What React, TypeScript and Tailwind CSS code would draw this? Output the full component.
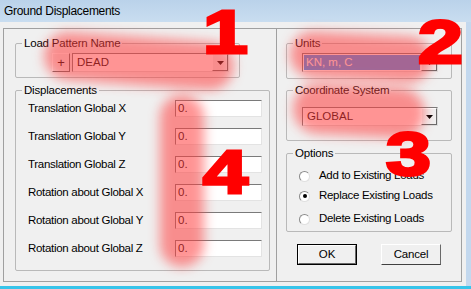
import React from 'react';

const rows = [
  'Translation Global X',
  'Translation Global Y',
  'Translation Global Z',
  'Rotation about Global X',
  'Rotation about Global Y',
  'Rotation about Global Z',
];

const ArrowButton = () => (
  <div className="w-[16px] h-full bg-[#f0f0f0] border border-t-white border-l-white border-r-[#696969] border-b-[#696969] flex items-center justify-center">
    <svg width="7" height="4" viewBox="0 0 7 4">
      <path d="M0 0h7L3.5 4z" fill="#000" />
    </svg>
  </div>
);

const GroupBox = ({
  label,
  className,
  children,
}: {
  label: string;
  className: string;
  children?: React.ReactNode;
}) => (
  <div className={`relative border border-[#b9b9b9] rounded-[2px] ${className}`}>
    <span className="absolute -top-[8px] left-[6px] px-[2px] bg-[#f0f0f0] text-[11.5px] tracking-[-0.2px] leading-[14px]">
      {label}
    </span>
    {children}
  </div>
);

const Radio = ({ label, checked }: { label: string; checked?: boolean }) => (
  <div className="flex items-center h-[20px]">
    <div className="ml-[12px] w-[11px] h-[11px] rounded-full bg-white border border-t-[#8a8a8a] border-l-[#8a8a8a] border-r-[#e0e0e0] border-b-[#e0e0e0] flex items-center justify-center">
      {checked && <div className="w-[4px] h-[4px] rounded-full bg-black" />}
    </div>
    <span className="ml-[9px] text-[11.5px] tracking-[-0.3px]">{label}</span>
  </div>
);

export default function App() {
  return (
    <div className="relative w-[471px] h-[289px] overflow-hidden bg-[#c3d8ee] font-['Liberation_Sans',Arial,sans-serif] text-black">
      {/* Title bar */}
      <div className="h-[22px] pl-[4px] flex items-center text-[12px] tracking-[-0.3px] bg-gradient-to-b from-[#bad2ea] to-[#c9ddf0]">
        Ground Displacements
      </div>

      {/* Body */}
      <div className="w-[466px] h-[264px] bg-[#f0f0f0] pt-[6px] pl-[3px]">
        <div className="flex h-[254px] w-[459px]">
          {/* Left panel */}
          <div className="w-[274px] h-full border border-[#a0a0a0] pl-[11px] pt-[14px]">
            <GroupBox label="Load Pattern Name" className="w-[225px] h-[35px] pl-[36px] pt-[9px]">
              <div className="flex h-[19px] gap-[2px]">
                <div className="w-[18px] h-full border border-t-white border-l-white border-r-[#696969] border-b-[#696969] flex items-center justify-center text-[13px] leading-none">
                  +
                </div>
                <div className="w-[157px] h-full bg-white border border-t-[#7a7a7a] border-l-[#7a7a7a] border-r-[#dcdcdc] border-b-[#dcdcdc] flex items-center">
                  <span className="flex-1 pl-[4px] text-[11.5px]">DEAD</span>
                  <ArrowButton />
                </div>
              </div>
            </GroupBox>

            <GroupBox label="Displacements" className="mt-[12px] w-[255px] h-[181px] pt-[9px]">
              <div className="flex flex-col">
                {rows.map((r) => (
                  <div key={r} className="flex items-start h-[28px]">
                    <span className="w-[159px] pl-[12px] text-[11.5px] tracking-[-0.3px] leading-[17px]">{r}</span>
                    <div className="w-[87px] h-[17px] bg-white border border-t-[#7a7a7a] border-l-[#7a7a7a] border-r-[#e3e3e3] border-b-[#e3e3e3] pl-[2px] text-[11.5px] leading-[15px]">
                      0.
                    </div>
                  </div>
                ))}
              </div>
            </GroupBox>
          </div>

          {/* Right panel */}
          <div className="w-[185px] h-full border-y border-r border-[#a0a0a0] pl-[9px] pt-[14px]">
            <GroupBox label="Units" className="w-[166px] h-[36px] pl-[15px] pt-[9px]">
              <div className="w-[136px] h-[19px] bg-white border border-t-[#7a7a7a] border-l-[#7a7a7a] border-r-[#dcdcdc] border-b-[#dcdcdc] flex items-center">
                <div className="flex-1 h-full p-[1px]">
                  <div className="h-full bg-[#3399ff] text-white text-[11.5px] leading-[15px] pl-[2px]">
                    KN, m, C
                  </div>
                </div>
                <ArrowButton />
              </div>
            </GroupBox>

            <GroupBox label="Coordinate System" className="mt-[11px] w-[166px] h-[51px] pl-[15px] pt-[16px]">
              <div className="w-[136px] h-[19px] bg-white border border-t-[#7a7a7a] border-l-[#7a7a7a] border-r-[#dcdcdc] border-b-[#dcdcdc] flex items-center">
                <span className="flex-1 pl-[4px] text-[11.5px]">GLOBAL</span>
                <ArrowButton />
              </div>
            </GroupBox>

            <GroupBox label="Options" className="mt-[12px] w-[166px] h-[79px] pt-[12px]">
              <Radio label="Add to Existing Loads" />
              <Radio label="Replace Existing Loads" checked />
              <div className="mt-[3px]">
                <Radio label="Delete Existing Loads" />
              </div>
            </GroupBox>

            <div className="flex gap-[24px] mt-[12px] pl-[11px]">
              <div className="w-[60px] h-[21px] border border-black">
                <div className="h-full border border-t-white border-l-white border-r-[#696969] border-b-[#696969] flex items-center justify-center text-[11.5px]">
                  OK
                </div>
              </div>
              <div className="w-[60px] h-[21px] border border-t-white border-l-white border-r-[#696969] border-b-[#404040] flex items-center justify-center text-[11.5px] tracking-[-0.2px]">
                Cancel
              </div>
            </div>
          </div>
        </div>
      </div>
      <div className="absolute left-0 bottom-0 w-full h-[3px] bg-[#37c4ea]" />

      {/* Red highlight blobs */}
      <div className="absolute left-[44px] top-[37px] w-[190px] h-[48px] rounded-full bg-[#ff3c3c]/55 blur-[6px] rotate-[4deg]" />
      <div className="absolute left-[290px] top-[34px] w-[142px] h-[46px] rounded-full bg-[#ff3c3c]/55 blur-[6px] rotate-[3deg]" />
      <div className="absolute left-[293px] top-[86px] w-[132px] h-[50px] rounded-full bg-[#ff3c3c]/55 blur-[6px] rotate-[3deg]" />
      <div className="absolute left-[160px] top-[95px] w-[44px] h-[172px] rounded-full bg-[#ff3c3c]/55 blur-[6px]" />

      {/* Red numbers */}
      <span className="absolute left-[203px] top-[1px] text-[62px] leading-none font-bold text-[#ff0000] origin-left scale-x-[1.3] [-webkit-text-stroke:3px_#ff0000]">1</span>
      <span className="absolute left-[418px] top-[11px] text-[62px] leading-none font-bold text-[#ff0000] origin-left scale-x-[1.3] [-webkit-text-stroke:3px_#ff0000]">2</span>
      <span className="absolute left-[386px] top-[123px] text-[62px] leading-none font-bold text-[#ff0000] origin-left scale-x-[1.3] [-webkit-text-stroke:3px_#ff0000]">3</span>
      <span className="absolute left-[203px] top-[141px] text-[62px] leading-none font-bold text-[#ff0000] origin-left scale-x-[1.3] [-webkit-text-stroke:3px_#ff0000]">4</span>
    </div>
  );
}
